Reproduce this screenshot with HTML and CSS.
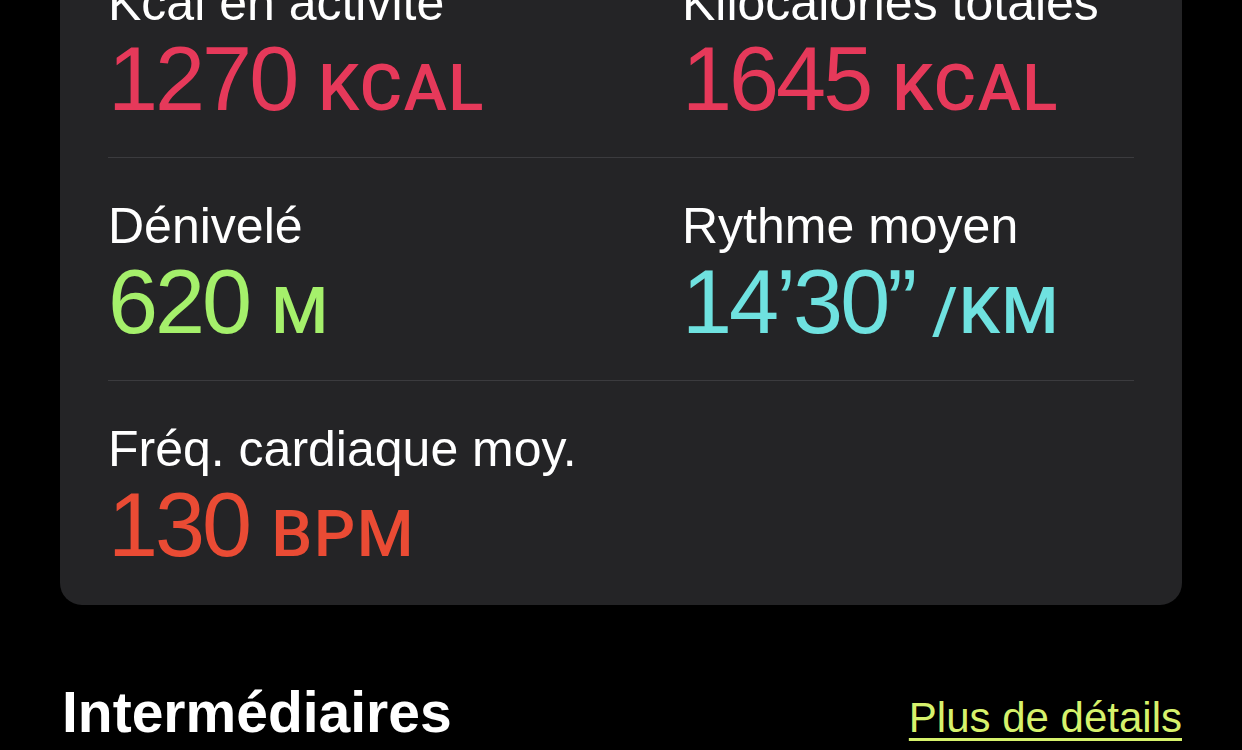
FILE: index.html
```html
<!DOCTYPE html>
<html>
    <head>
        <meta charset="utf-8" />
        <title>Résumé de l'entraînement</title>
        <link rel="stylesheet" href="styles.css">
    </head>
    <body>
        <div class="screen">
            <!-- Workout summary card (scrolled, top is cut off) -->
            <div class="summary">
                <div class="row">
                    <div class="metric">
                        <div class="label">Kcal en activité</div>
                        <div class="value kcal">1270<span class="unit">KCAL</span></div>
                    </div>
                    <div class="metric">
                        <div class="label">Kilocalories totales</div>
                        <div class="value kcal">1645<span class="unit">KCAL</span></div>
                    </div>
                </div>
                <div class="row">
                    <div class="metric">
                        <div class="label">Dénivelé</div>
                        <div class="value climb">620<span class="unit">M</span></div>
                    </div>
                    <div class="metric">
                        <div class="label">Rythme moyen</div>
                        <div class="value pace">14’30”<span class="unit">/KM</span></div>
                    </div>
                </div>
                <div class="row">
                    <div class="metric">
                        <div class="label">Fréq. cardiaque moy.</div>
                        <div class="value heart">130<span class="unit">BPM</span></div>
                    </div>
                </div>
            </div>

            <div class="section-head">
                <h2>Intermédiaires</h2>
                <a href="#" class="more">Plus de détails</a>
            </div>
        </div>
    </body>
</html>
```

FILE: styles.css
```css
body {
    margin: 0;
    background-color: #000;
    color: #fff;
    font-family: "Liberation Sans", Arial, sans-serif;
    overflow: hidden;
}

.screen {
    padding: 0 60px;
}

.summary {
    margin-top: -65px;
    padding: 0 48px;
    background-color: #242426;
    border-radius: 0 0 22px 22px;
}

.row {
    display: grid;
    grid-template-columns: 574px 1fr;
    padding: 38px 0 32px;
    border-bottom: 1px solid #3b3b3e;
}

.row:last-child {
    border-bottom: none;
    padding-bottom: 34px;
}

.label {
    font-size: 50px;
    line-height: 60px;
    white-space: nowrap;
}

.value {
    font-size: 90px;
    line-height: 92px;
    letter-spacing: -3px;
    white-space: nowrap;
}

.unit {
    font-family: Roboto, "Liberation Sans", sans-serif;
    font-size: 65px;
    line-height: 1;
    font-weight: 500;
    letter-spacing: 1.5px;
    margin-left: 22px;
}

.pace .unit {
    margin-left: 18px;
}

.kcal {
    color: #e6395a;
}

.climb {
    color: #a5f06b;
}

.pace {
    color: #6fe2e0;
}

.heart {
    color: #ea4b34;
}

.section-head {
    display: flex;
    justify-content: space-between;
    align-items: baseline;
    margin-top: 73px;
}

.section-head h2 {
    margin: 0 0 0 2px;
    font-size: 57px;
    line-height: 68px;
    font-weight: 700;
}

.more {
    font-size: 42px;
    color: #d6f26c;
    text-decoration: underline;
    text-decoration-thickness: 3px;
    text-underline-offset: 6px;
}
```
